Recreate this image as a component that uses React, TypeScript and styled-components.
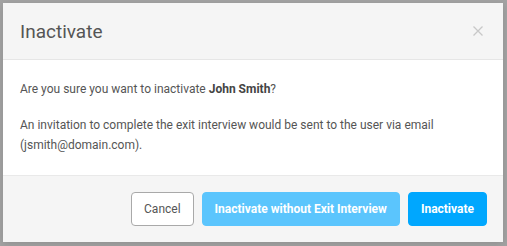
import * as React from 'react';
import styled, { createGlobalStyle } from 'styled-components';

const GlobalStyle = createGlobalStyle`
  html, body { margin: 0; padding: 0; }
  body {
    background: #a3a3a3;
    font-family: Roboto, "Liberation Sans", sans-serif;
    -webkit-font-smoothing: antialiased;
  }
`;

const Backdrop = styled.div`
  width: 507px;
  height: 246px;
  padding: 3px 4px 4px 3px;
  box-sizing: border-box;
  overflow: hidden;
`;

const Modal = styled.div`
  width: 500px;
  height: 239px;
  display: flex;
  flex-direction: column;
  background: #fff;
  box-shadow: 0 2px 8px rgba(0,0,0,.12);
`;

const Header = styled.header`
  height: 56px;
  display: flex;
  align-items: center;
  justify-content: space-between;
  padding: 0 19px 0 17px;
  background: #f5f5f5;
  border-bottom: 1px solid #e6e6e6;
`;

const Title = styled.h3`
  margin: 0;
  font-size: 19px;
  font-weight: 400;
  color: #555;
`;

const Close = styled.button`
  border: 0;
  background: none;
  padding: 0;
  width: 12px;
  height: 12px;
  display: flex;
  cursor: pointer;
`;

const Body = styled.div`
  flex: 1 1 auto;
  padding: 19px 17px 20px;
  font-size: 12px;
  line-height: 20px;
  color: #555;
  p { margin: 0; }
  p + p { margin-top: 16px; }
  strong { font-weight: 700; color: #444; }
`;

const Footer = styled.footer`
  height: 66px;
  display: flex;
  align-items: center;
  justify-content: flex-end;
  gap: 8px;
  padding: 0 16px;
  background: #f5f5f5;
  border-top: 1px solid #e9e9e9;
`;

const Button = styled.button<{ $variant: 'default' | 'light' | 'primary' }>`
  height: 34px;
  padding: 0 12px;
  border-radius: 4px;
  font-family: inherit;
  font-size: 12px;
  cursor: pointer;
  border: 1px solid ${({ $variant }) =>
    $variant === 'default' ? '#a9a9a9' : $variant === 'light' ? '#5bc5fd' : '#00a7fe'};
  background: ${({ $variant }) =>
    $variant === 'default' ? '#fff' : $variant === 'light' ? '#5bc5fd' : '#00a7fe'};
  color: ${({ $variant }) => ($variant === 'default' ? '#555' : '#fff')};
  font-weight: ${({ $variant }) => ($variant === 'default' ? 400 : 700)};
`;

export default function App() {
  return (
    <>
      <GlobalStyle />
      <Backdrop>
        <Modal role="dialog" aria-modal="true">
          <Header>
            <Title>Inactivate</Title>
            <Close aria-label="Close">
              <svg width="12" height="12" viewBox="0 0 12 12">
                <path d="M1.5 1.5l9 9M10.5 1.5l-9 9" stroke="#c8c8c8" strokeWidth="1.3" />
              </svg>
            </Close>
          </Header>
          <Body>
            <p>
              Are you sure you want to inactivate <strong>John Smith</strong>?
            </p>
            <p>
              An invitation to complete the exit interview would be sent to the user via email
              (jsmith@domain.com).
            </p>
          </Body>
          <Footer>
            <Button $variant="default">Cancel</Button>
            <Button $variant="light">Inactivate without Exit Interview</Button>
            <Button $variant="primary">Inactivate</Button>
          </Footer>
        </Modal>
      </Backdrop>
    </>
  );
}
